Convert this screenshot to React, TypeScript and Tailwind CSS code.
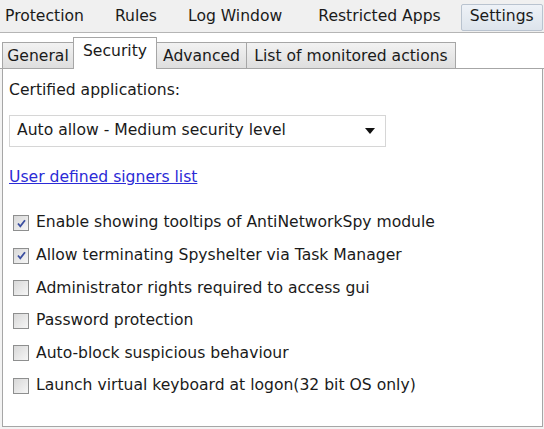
import React from "react";

const font = { fontFamily: '"DejaVu Sans", Verdana, sans-serif' };

function Check({ checked }: { checked: boolean }) {
  return (
    <div className="w-[16px] h-[16px] border border-[#8e8f8f] bg-gradient-to-br from-[#d8d8d8] to-[#f6f6f6] flex items-center justify-center">
      {checked && (
        <svg width="11" height="11" viewBox="0 0 11 11">
          <path d="M2 5.5 L4.3 8.3 L9 2.2" fill="none" stroke="#3b4fa0" strokeWidth="1.8" />
        </svg>
      )}
    </div>
  );
}

export default function App() {
  const items = [
    { t: "Enable showing tooltips of AntiNetworkSpy module", c: true },
    { t: "Allow terminating Spyshelter via Task Manager", c: true },
    { t: "Administrator rights required to access gui", c: false },
    { t: "Password protection", c: false },
    { t: "Auto-block suspicious behaviour", c: false },
    { t: "Launch virtual keyboard at logon(32 bit OS only)", c: false },
  ];
  return (
    <div className="w-[544px] h-[429px] bg-[#f3f3f3] text-[15.6px] text-[#1a1a1a] flex flex-col overflow-hidden" style={font}>
      <div className="h-[33px] flex items-center border-b border-[#b5b5b5] bg-[#f0f0f0] pt-[2px]">
        <span className="ml-[5px]">Protection</span>
        <span className="ml-[31px]">Rules</span>
        <span className="ml-[31px]">Log Window</span>
        <span className="ml-[36px]">Restricted Apps</span>
        <span className="ml-[20px] h-[27px] px-[8px] flex items-center border border-[#b9c3cf] rounded-[2px] bg-gradient-to-b from-[#eef2f7] to-[#dde4ec]">Settings</span>
      </div>
      <div className="h-[36px] flex items-end pl-[2px] bg-white relative">
        <div className="absolute left-0 right-0 bottom-0 h-px bg-[#a6a6a6]" />
        <div className="h-[27px] w-[72px] border border-[#a6a6a6] bg-gradient-to-b from-[#f2f2f2] to-[#dedede] flex items-center justify-center relative pt-[2px]">General</div>
        <div className="h-[32px] w-[84px] border border-[#a6a6a6] border-b-0 bg-white flex items-center justify-center relative -ml-px z-10 pb-[3px]">Security</div>
        <div className="h-[27px] w-[91px] border border-[#a6a6a6] bg-gradient-to-b from-[#f2f2f2] to-[#dedede] flex items-center justify-center relative -ml-px pt-[2px]">Advanced</div>
        <div className="h-[27px] w-[210px] border border-[#a6a6a6] bg-gradient-to-b from-[#f2f2f2] to-[#dedede] flex items-center justify-center relative -ml-px pt-[2px]">List of monitored actions</div>
      </div>
      <div className="flex-1 bg-white border-r border-b border-l border-[#a6a6a6] ml-[2px] mb-[2px] mr-px flex flex-col">
        <div className="pl-[6px] mt-[11px] h-[22px] flex items-center">Certified applications:</div>
        <div className="ml-[6px] mt-[13px] w-[377px] h-[32px] border border-[#d6d6d6] flex items-center justify-between pl-[7px] pr-[10px]">
          <span>Auto allow - Medium security level</span>
          <svg width="10" height="6" viewBox="0 0 10 6"><path d="M0 0 H10 L5 6 Z" fill="#111" /></svg>
        </div>
        <div className="pl-[6px] mt-[20px] h-[22px] flex items-center">
          <span className="text-[#2b2bd6] underline">User defined signers list</span>
        </div>
        <div className="mt-[23px] flex flex-col gap-[10.6px]">
          {items.map((it) => (
            <div key={it.t} className="h-[22px] flex items-center pl-[10px]">
              <Check checked={it.c} />
              <span className="ml-[7px]">{it.t}</span>
            </div>
          ))}
        </div>
      </div>
    </div>
  );
}
